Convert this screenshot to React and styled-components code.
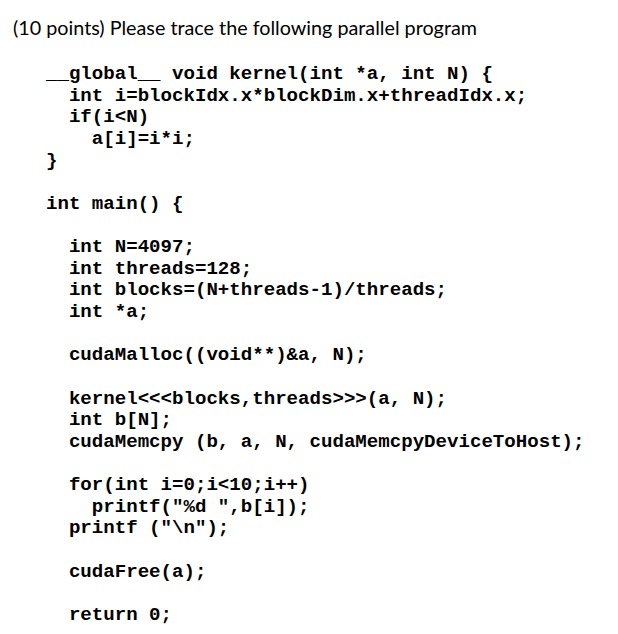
import React from 'react';
import styled, { createGlobalStyle } from 'styled-components';

const GlobalStyle = createGlobalStyle`
  html, body {
    margin: 0;
    padding: 0;
    background: #ffffff;
  }
`;

const lines = [
  { indent: 0, text: '__global__ void kernel(int *a, int N) {' },
  { indent: 2, text: 'int i=blockIdx.x*blockDim.x+threadIdx.x;' },
  { indent: 2, text: 'if(i<N)' },
  { indent: 4, text: 'a[i]=i*i;' },
  { indent: 0, text: '}' },
  { indent: 0, text: '' },
  { indent: 0, text: 'int main() {' },
  { indent: 0, text: '' },
  { indent: 2, text: 'int N=4097;' },
  { indent: 2, text: 'int threads=128;' },
  { indent: 2, text: 'int blocks=(N+threads-1)/threads;' },
  { indent: 2, text: 'int *a;' },
  { indent: 0, text: '' },
  { indent: 2, text: 'cudaMalloc((void**)&a, N);' },
  { indent: 0, text: '' },
  { indent: 2, text: 'kernel<<<blocks,threads>>>(a, N);' },
  { indent: 2, text: 'int b[N];' },
  { indent: 2, text: 'cudaMemcpy (b, a, N, cudaMemcpyDeviceToHost);' },
  { indent: 0, text: '' },
  { indent: 2, text: 'for(int i=0;i<10;i++)' },
  { indent: 4, text: 'printf("%d ",b[i]);' },
  { indent: 2, text: 'printf ("\\n");' },
  { indent: 0, text: '' },
  { indent: 2, text: 'cudaFree(a);' },
  { indent: 0, text: '' },
  { indent: 2, text: 'return 0;' },
];

const App = () => {
  return (
    <Page>
      <GlobalStyle />
      <Heading>(10 points) Please trace the following parallel program</Heading>
      <CodeBlock>
        {lines.map((line, i) => (
          <CodeLine key={i} $indent={line.indent}>
            {line.text}
          </CodeLine>
        ))}
      </CodeBlock>
    </Page>
  );
};

const Page = styled.div`
  width: 618px;
  height: 634px;
  overflow: hidden;
  box-sizing: border-box;
  padding: 16px 0 0 13px;
  background: #ffffff;
  color: #000000;
`;

const Heading = styled.p`
  margin: 0;
  font-family: Lato, 'Liberation Sans', sans-serif;
  font-size: 19.75px;
  line-height: 24px;
  color: #000000;
`;

const CodeBlock = styled.div`
  margin: 24px 0 0 33px;
  font-family: 'Liberation Mono', 'Courier New', monospace;
  font-weight: bold;
  font-size: 19.1px;
  line-height: 21.65px;
`;

const CodeLine = styled.div`
  height: 21.65px;
  white-space: pre;
  padding-left: ${(p) => p.$indent}ch;
`;

export default App;
